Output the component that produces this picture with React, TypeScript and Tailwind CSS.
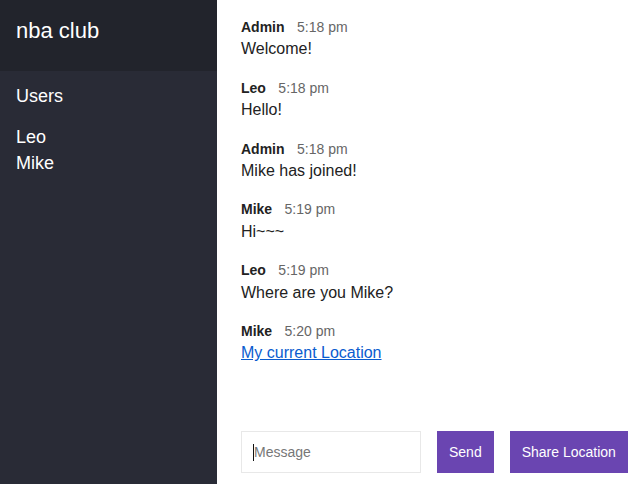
import React from "react";

const messages = [
  { name: "Admin", time: "5:18 pm", text: "Welcome!" },
  { name: "Leo", time: "5:18 pm", text: "Hello!" },
  { name: "Admin", time: "5:18 pm", text: "Mike has joined!" },
  { name: "Mike", time: "5:19 pm", text: "Hi~~~" },
  { name: "Leo", time: "5:19 pm", text: "Where are you Mike?" },
  { name: "Mike", time: "5:20 pm", link: "My current Location" },
];

export default function App() {
  return (
    <div
      className="flex h-[484px] w-[639px] overflow-hidden text-[16px] leading-[1.4] text-[#222]"
      style={{ fontFamily: '"Liberation Sans", Arial, Helvetica, sans-serif' }}
    >
      <aside className="flex w-[217px] shrink-0 flex-col bg-[#292b36] text-white">
        <h2 className="bg-[#22242c] px-4 pt-[16px] pb-[24px] text-[22px] font-normal leading-[1.4]">nba club</h2>
        <h3 className="px-4 pt-[13px] text-[18px] font-normal leading-[1.4]">Users</h3>
        <ul className="px-4 pt-[15px] text-[18px] leading-[26px]">
          <li>Leo</li>
          <li>Mike</li>
        </ul>
      </aside>
      <main className="flex flex-1 flex-col bg-white">
        <div className="flex-1 px-6 pt-4">
          {messages.map((m, i) => (
            <div key={i} className="mb-4">
              <p className="leading-[22.4px]">
                <span className="mr-2 text-[14px] font-bold text-[#222]">{m.name}</span>{" "}
                <span className="text-[14px] text-[#666]">{m.time}</span>
              </p>
              <p className="leading-[22.4px]">
                {m.link ? (
                  <a href="#" className="text-[#0a5ccf] underline">
                    {m.link}
                  </a>
                ) : (
                  m.text
                )}
              </p>
            </div>
          ))}
        </div>
        <div className="flex items-stretch gap-4 pb-[11px] pl-6">
          <div className="relative">
            <input
              className="h-[42px] w-[180px] border border-[#e8e8e8] px-3 text-[14px] text-[#222] outline-none placeholder:text-[#777]"
              placeholder="Message"
            />
            <span className="absolute left-[12px] top-[13px] h-[17px] w-px bg-[#111]" />
          </div>
          <button className="h-[42px] bg-[#6a45b1] px-3 pt-px text-[14px] text-white">Send</button>
          <button className="h-[42px] bg-[#6a45b1] px-3 pt-px text-[14px] text-white">Share Location</button>
        </div>
      </main>
    </div>
  );
}
